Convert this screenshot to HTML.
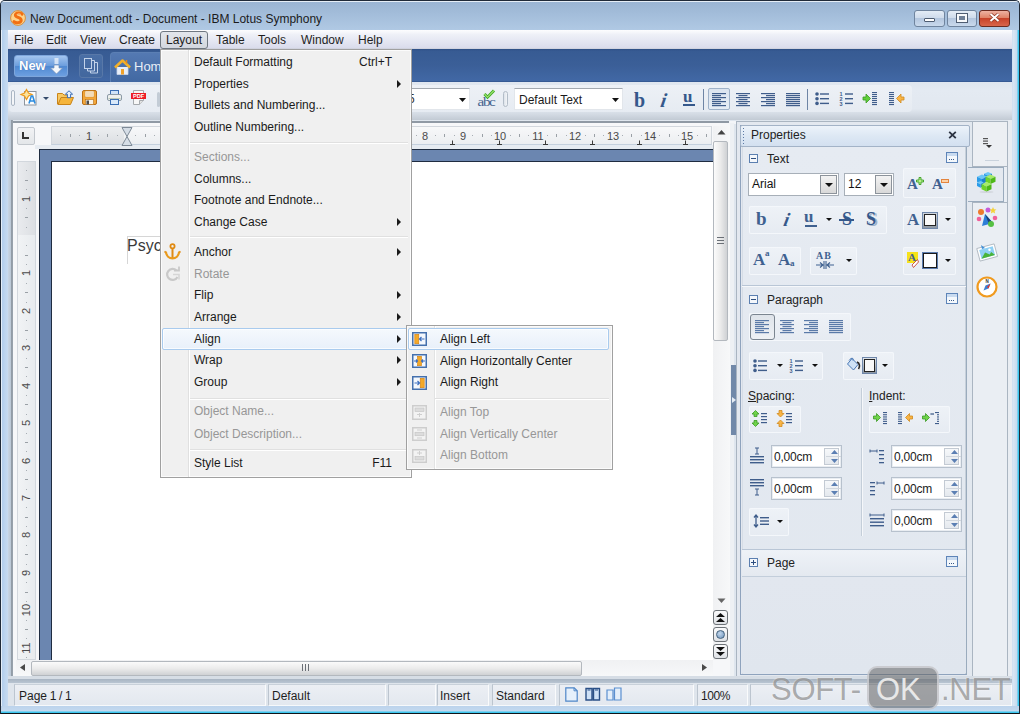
<!DOCTYPE html>
<html><head><meta charset="utf-8">
<style>
*{margin:0;padding:0;box-sizing:border-box}
html,body{width:1020px;height:714px;overflow:hidden;background:#fff}
body{position:relative;font-family:"Liberation Sans",sans-serif;font-size:12px;color:#1e1e1e}
.a{position:absolute}
.t{position:absolute;white-space:nowrap;line-height:14px}
svg{position:absolute;overflow:visible}
.grp{position:absolute;border-radius:2px;background:linear-gradient(#eef2f7,#e6ebf2);box-shadow:inset 0 0 0 1px #f4f7fb}
.spin{position:absolute;width:71px;height:23px;background:#fff;border:1px solid #b7c1cd;box-shadow:inset 0 0 0 1px #e9edf2}
.spin .t{left:2px;top:4px;color:#222;letter-spacing:-0.2px}
.sb{position:absolute;right:2px;top:2px;width:15px;height:17px;border:1px solid #c3cad3;background:linear-gradient(#f6f8fa,#e5e9ee)}
.fld{position:absolute;top:684px;height:22px;background:linear-gradient(#eceff4,#e3e8ef);border-left:1px solid #bcc5cf;border-top:1px solid #c9d1da;border-right:1px solid #fafbfc;border-bottom:1px solid #f7f9fb}
</style></head><body>

<!-- window frame -->
<div class="a" style="left:0;top:0;width:1020px;height:714px;background:#bcd0e8;border-radius:5px 5px 0 0"></div>
<div class="a" style="left:0;top:0;width:1020px;height:714px;border:1px solid #202a38;border-radius:5px 5px 0 0;border-bottom-color:#101418"></div>
<div class="a" style="left:1px;top:1px;width:1018px;height:29px;border-radius:4px 4px 0 0;background:linear-gradient(#e6eef6 0,#e6eef6 1px,#9bb5d3 1px,#a2bcd9 40%,#b0c9e4)"></div>
<div class="a" style="left:1px;top:30px;width:1018px;height:683px;background:linear-gradient(90deg,#e4eef8,#e4eef8 1px,#b2cdec 1px,#bad3ee 3px,#c8dbf0 7px,#c8dbf0 1011px,#dae7f4 1012px,#c6daef 1016px,#3cc6ee 1017px)"></div>
<div class="a" style="left:1px;top:706px;width:1018px;height:7px;background:linear-gradient(#bcd3ec,#c4d9ef 5px,#3cc6ee 6px)"></div>

<!-- title -->
<svg style="left:10px;top:10px" width="16" height="16" viewBox="0 0 16 16">
 <circle cx="8" cy="8" r="7.4" fill="#fcd38c" stroke="#d9903c" stroke-width="1"/>
 <path d="M12 4.2C10.6 2.4 5.8 2.6 5.4 5 5 7.6 11.2 7.2 11.2 10.2 11.2 12.8 6.2 13.6 4 11.6" fill="none" stroke="#f26f12" stroke-width="3" stroke-linecap="round"/>
 <path d="M10.8 4.4C9.6 3.6 7 3.8 6.8 5" fill="none" stroke="#ffe2a8" stroke-width=".8"/>
</svg>
<div class="t" style="left:30px;top:12px;font-size:12px;color:#1b1b1b">New Document.odt - Document - IBM Lotus Symphony</div>

<!-- window buttons -->
<div class="a" style="left:914px;top:10px;width:31px;height:17px;border:1px solid #6f849e;border-radius:3px;background:linear-gradient(#e3ecf6,#cfdcec 45%,#b4c7df 50%,#c9d9ec)"></div>
<div class="a" style="left:924px;top:18px;width:11px;height:4px;background:#fff;border:1px solid #4e5d72;border-radius:1px"></div>
<div class="a" style="left:947px;top:10px;width:30px;height:17px;border:1px solid #6f849e;border-radius:3px;background:linear-gradient(#e3ecf6,#cfdcec 45%,#b4c7df 50%,#c9d9ec)"></div>
<div class="a" style="left:957px;top:14px;width:10px;height:8px;border:2px solid #f7f9fb;outline:1px solid #4e5d72;background:#6f8097"></div>
<div class="a" style="left:979px;top:10px;width:31px;height:17px;border:1px solid #6b2b20;border-radius:3px;background:linear-gradient(#eeb2a2,#e08469 45%,#c8432a 50%,#d9664b)"></div>
<svg style="left:989px;top:13px" width="11" height="9" viewBox="0 0 11 9"><path d="M1.5 1L9.5 8M9.5 1L1.5 8" stroke="#8a3322" stroke-width="3.4"/><path d="M1.5 1L9.5 8M9.5 1L1.5 8" stroke="#fff" stroke-width="2"/></svg>

<!-- menu bar -->
<div class="a" style="left:8px;top:30px;width:1004px;height:19px;background:linear-gradient(#fdfdfe,#eef0f7 25%,#e4e6f2 60%,#dadcec 94%,#c9ccd6)"></div>
<div class="a" style="left:160px;top:31px;width:48px;height:18px;border:1px solid #6f7780;border-radius:3px;background:linear-gradient(#e3e6eb,#d3d7de)"></div>
<div class="t" style="left:14px;top:33px">File</div>
<div class="t" style="left:46px;top:33px">Edit</div>
<div class="t" style="left:80px;top:33px">View</div>
<div class="t" style="left:119px;top:33px">Create</div>
<div class="t" style="left:166px;top:33px">Layout</div>
<div class="t" style="left:216px;top:33px">Table</div>
<div class="t" style="left:258px;top:33px">Tools</div>
<div class="t" style="left:301px;top:33px">Window</div>
<div class="t" style="left:358px;top:33px">Help</div>

<!-- blue band -->
<div class="a" style="left:8px;top:49px;width:1004px;height:33px;background:linear-gradient(#2d4e84,#375b93 2px,#3b5f98 50%,#4168a5 96%,#2f5289)"></div>
<div class="a" style="left:14px;top:55px;width:54px;height:22px;border-radius:3px;border:1px solid #7ea6dc;background:linear-gradient(#a4c5ef,#6d9edd 48%,#5089d2 52%,#6d9fe0)"></div>
<div class="t" style="left:19px;top:59px;color:#fff;font-weight:bold;font-size:13px;text-shadow:0 0 1px #3a6ab0">New</div>
<svg style="left:50px;top:58px" width="13" height="17" viewBox="0 0 13 17">
 <path d="M4.5 1h4M4.5 3h4M4.5 5h4" stroke="#eef3fa" stroke-width="1.3"/>
 <path d="M4 7h5v3h3.5L6.5 16 0.5 10H4z" fill="#f4f7fb" stroke="#6f8db8" stroke-width=".7"/>
</svg>
<div class="a" style="left:79px;top:54px;width:24px;height:24px;border:1px solid #5878a8;border-radius:3px;background:linear-gradient(#4a6fa6,#42679e)"></div>
<svg style="left:84px;top:58px" width="14" height="16" viewBox="0 0 14 16">
 <rect x="0.5" y="0.5" width="7" height="10" fill="none" stroke="#c3d3ea" stroke-width="1"/>
 <path d="M8 2.5h2.5v10.5h-7v-2" fill="none" stroke="#c3d3ea" stroke-width="1"/>
 <path d="M11 4.5h2.5v10.5h-7v-2" fill="none" stroke="#c3d3ea" stroke-width="1"/>
</svg>
<div class="a" style="left:110px;top:52px;width:60px;height:30px;border-radius:4px 4px 0 0;border:1px solid #5b7fb4;border-bottom:none;background:linear-gradient(#5479b2,#4168a2)"></div>
<svg style="left:114px;top:59px" width="17" height="16" viewBox="0 0 17 16">
 <path d="M3 8v7.5h11V8" fill="#e8eef8" stroke="#c9d6e8" stroke-width=".8"/>
 <path d="M1 8.5L8.5 1.5 16 8.5" fill="none" stroke="#f3b02a" stroke-width="2.6" stroke-linejoin="round"/>
 <path d="M12.5 1v3.5" stroke="#e58a1c" stroke-width="1.5"/>
 <rect x="7" y="10" width="3" height="5.5" fill="#f0a22a"/>
</svg>
<div class="t" style="left:134px;top:60px;color:#e8eef7;font-size:13px">Hom</div>

<!-- toolbar 2 -->
<div class="a" style="left:8px;top:82px;width:1004px;height:38px;background:linear-gradient(#dfe6ef,#e4eaf2 20%,#e2e8f0 70%,#d3dae3 85%,#c2cad4)"></div>
<div class="a" style="left:9px;top:85px;width:903px;height:27px;border-radius:4px;background:linear-gradient(#edf1f6,#e6ebf2)"></div>
<!-- toolbar icons -->
<div class="a" style="left:11px;top:90px;width:4px;height:16px;border-radius:2px;border:1px solid #aab6c4;background:#f4f6f9"></div>
<svg style="left:21px;top:89px" width="17" height="17" viewBox="0 0 17 17">
 <rect x="3.5" y="2.5" width="11.5" height="13.5" fill="#fdfdfd" stroke="#8e949c"/>
 <path d="M5.5 0.5L7.5 4 11 5.5 7.5 7 5.5 10.5 3.5 7 0 5.5 3.5 4z" fill="#fbe39e" stroke="#ee9a1c" stroke-width="1.2"/>
 <path d="M8 14.5L10.3 7h1.4l2.3 7.5M9 12h4" fill="none" stroke="#2e8de0" stroke-width="1.6"/>
</svg>
<svg style="left:43px;top:97px" width="6" height="3" viewBox="0 0 6 3"><path d="M0 0h6L3 3z" fill="#334a6a"/></svg>
<svg style="left:57px;top:90px" width="17" height="15" viewBox="0 0 17 15">
 <path d="M0.5 3.5h5l1.5 1.5h6v9h-12.5z" fill="#f7c863" stroke="#c98418"/>
 <path d="M1 14.5l3-7h12.5l-3 7z" fill="#f5b53c" stroke="#c98418"/>
 <path d="M12 0.8l3.6 3.4h-2v3.5h-3.2v-3.5h-2z" fill="#e6f1fb" stroke="#3c6db4"/>
</svg>
<svg style="left:82px;top:90px" width="15" height="15" viewBox="0 0 15 15">
 <rect x="0.5" y="0.5" width="14" height="14" rx="1.5" fill="#f3a73a" stroke="#b86f17"/>
 <rect x="3" y="1" width="9" height="6" fill="#fff8ea" stroke="#d08b2a" stroke-width=".6"/>
 <path d="M4 3h7M4 5h7" stroke="#e0b070" stroke-width=".8"/>
 <rect x="3.5" y="9.5" width="8" height="5" fill="#f7f2e8" stroke="#b86f17" stroke-width=".6"/>
 <rect x="4.5" y="10.5" width="2.5" height="4" fill="#4d4d4d"/>
</svg>
<svg style="left:107px;top:90px" width="15" height="15" viewBox="0 0 15 15">
 <rect x="3.5" y="0.5" width="8" height="5" fill="#cfe3f8" stroke="#3b6fb4"/>
 <rect x="0.5" y="4.5" width="14" height="6" rx="1.5" fill="#eef0ee" stroke="#8c9aa6"/>
 <path d="M1.5 8.5h12" stroke="#b8c8b8"/>
 <rect x="3.5" y="9.5" width="8" height="5" fill="#d9e9fa" stroke="#3b6fb4"/>
</svg>
<svg style="left:131px;top:90px" width="15" height="15" viewBox="0 0 15 15">
 <path d="M2.5 0.5h10v10l-4 4h-6z" fill="#f7f7f7" stroke="#a6aaae"/>
 <path d="M8.5 14.5v-4h4" fill="#e2e2e2" stroke="#a6aaae"/>
 <rect x="0" y="3" width="15" height="6" fill="#ee1c24"/>
 <text x="7.5" y="8.2" font-family="Liberation Sans" font-size="5.6" font-weight="bold" fill="#fff" text-anchor="middle">PDF</text>
</svg>
<div class="a" style="left:157px;top:92px;width:3px;height:15px;border-radius:2px;background:#c3ccd6"></div>

<!-- font name combo (mostly hidden) -->
<div class="a" style="left:380px;top:88px;width:90px;height:22px;background:#fff;border:1px solid #e2e6eb;border-top-color:#a3a9b0"></div>
<div class="t" style="left:408px;top:92px;color:#333;font-size:12px">5</div>
<svg style="left:459px;top:98px" width="7" height="4" viewBox="0 0 7 4"><path d="M0 0h7L3.5 4z" fill="#111"/></svg>
<svg style="left:477px;top:89px" width="19" height="18" viewBox="0 0 19 18">
 <text x="0.5" y="16.5" font-family="Liberation Serif" font-size="13.5" fill="#45628e" letter-spacing="-1.2" textLength="17" lengthAdjust="spacingAndGlyphs">abc</text>
 <path d="M7.5 5l3 3.2L17 1.5" fill="none" stroke="#3faa24" stroke-width="3"/>
 <path d="M7.5 5l3 3.2L17 1.5" fill="none" stroke="#9be06e" stroke-width="1.1"/>
</svg>
<div class="a" style="left:503px;top:91px;width:5px;height:16px;border-radius:3px;border:1px solid #b3bdc8;background:linear-gradient(90deg,#dde3ea,#f3f5f8)"></div>
<div class="a" style="left:514px;top:88px;width:109px;height:22px;background:#fff;border:1px solid #e2e6eb;border-top-color:#a3a9b0"></div>
<div class="t" style="left:519px;top:93px;color:#1a1a1a">Default Text</div>
<svg style="left:612px;top:98px" width="7" height="4" viewBox="0 0 7 4"><path d="M0 0h7L3.5 4z" fill="#111"/></svg>

<div class="t" style="left:634px;top:90px;font-family:'Liberation Serif';font-weight:bold;font-size:20px;line-height:20px;color:#35588b">b</div>
<div class="t" style="left:661px;top:90px;font-family:'Liberation Serif';font-weight:bold;font-style:italic;font-size:20px;line-height:20px;color:#35588b;transform:skewX(-10deg)">i</div>
<div class="t" style="left:683px;top:87px;font-family:'Liberation Serif';font-weight:bold;font-size:17px;line-height:20px;color:#35588b">u</div>
<div class="a" style="left:683px;top:104px;width:12px;height:1.5px;background:#35588b"></div>
<div class="a" style="left:703px;top:89px;width:1px;height:21px;background:#6e85a5"></div>
<div class="a" style="left:708px;top:88px;width:22px;height:22px;border:1px solid #9fb2c9;border-radius:2px;background:linear-gradient(#dbe4ef,#e6edf5)"></div>
<svg style="left:712px;top:93px" width="14" height="14" viewBox="0 0 14 14"><rect x="0" y="0" width="14" height="1.2" fill="#3f5d8b"/><rect x="0" y="2" width="9" height="1.2" fill="#3f5d8b"/><rect x="0" y="4" width="14" height="1.2" fill="#3f5d8b"/><rect x="0" y="6" width="9" height="1.2" fill="#3f5d8b"/><rect x="0" y="8" width="14" height="1.2" fill="#3f5d8b"/><rect x="0" y="10" width="9" height="1.2" fill="#3f5d8b"/><rect x="0" y="12" width="14" height="1.2" fill="#3f5d8b"/></svg>
<svg style="left:736px;top:93px" width="14" height="14" viewBox="0 0 14 14"><rect x="0.0" y="0" width="14.0" height="1.2" fill="#3f5d8b"/><rect x="2.5" y="2" width="9.0" height="1.2" fill="#3f5d8b"/><rect x="0.0" y="4" width="14.0" height="1.2" fill="#3f5d8b"/><rect x="2.5" y="6" width="9.0" height="1.2" fill="#3f5d8b"/><rect x="0.0" y="8" width="14.0" height="1.2" fill="#3f5d8b"/><rect x="2.5" y="10" width="9.0" height="1.2" fill="#3f5d8b"/><rect x="0.0" y="12" width="14.0" height="1.2" fill="#3f5d8b"/></svg>
<svg style="left:761px;top:93px" width="14" height="14" viewBox="0 0 14 14"><rect x="0" y="0" width="14" height="1.2" fill="#3f5d8b"/><rect x="5" y="2" width="9" height="1.2" fill="#3f5d8b"/><rect x="0" y="4" width="14" height="1.2" fill="#3f5d8b"/><rect x="5" y="6" width="9" height="1.2" fill="#3f5d8b"/><rect x="0" y="8" width="14" height="1.2" fill="#3f5d8b"/><rect x="5" y="10" width="9" height="1.2" fill="#3f5d8b"/><rect x="0" y="12" width="14" height="1.2" fill="#3f5d8b"/></svg>
<svg style="left:786px;top:93px" width="14" height="14" viewBox="0 0 14 14"><rect x="0" y="0" width="14" height="1.2" fill="#3f5d8b"/><rect x="0" y="2" width="14" height="1.2" fill="#3f5d8b"/><rect x="0" y="4" width="14" height="1.2" fill="#3f5d8b"/><rect x="0" y="6" width="14" height="1.2" fill="#3f5d8b"/><rect x="0" y="8" width="14" height="1.2" fill="#3f5d8b"/><rect x="0" y="10" width="14" height="1.2" fill="#3f5d8b"/><rect x="0" y="12" width="14" height="1.2" fill="#3f5d8b"/></svg><div class="a" style="left:807px;top:89px;width:1px;height:21px;background:#6e85a5"></div>
<svg style="left:815px;top:92px" width="15" height="14" viewBox="0 0 15 14">
 <circle cx="2" cy="2" r="1.8" fill="#3f5d8b"/><circle cx="2" cy="6.7" r="1.8" fill="#3f5d8b"/><circle cx="2" cy="11.4" r="1.8" fill="#3f5d8b"/>
 <rect x="5" y="1.3" width="9" height="1.4" fill="#3f5d8b"/><rect x="5" y="6" width="9" height="1.4" fill="#3f5d8b"/><rect x="5" y="10.7" width="9" height="1.4" fill="#3f5d8b"/>
</svg>
<svg style="left:839px;top:91px" width="15" height="15" viewBox="0 0 15 15">
 <text x="0.5" y="5" font-family="Liberation Sans" font-size="5.5" font-weight="bold" fill="#3f5d8b">1</text>
 <text x="0.5" y="10" font-family="Liberation Sans" font-size="5.5" font-weight="bold" fill="#3f5d8b">2</text>
 <text x="0.5" y="15" font-family="Liberation Sans" font-size="5.5" font-weight="bold" fill="#3f5d8b">3</text>
 <rect x="6" y="2.3" width="8" height="1.4" fill="#3f5d8b"/><rect x="6" y="7" width="8" height="1.4" fill="#3f5d8b"/><rect x="6" y="11.7" width="8" height="1.4" fill="#3f5d8b"/>
</svg>
<svg style="left:862px;top:92px" width="16" height="14" viewBox="0 0 16 14">
 <path d="M1 5h3V2l4.5 4.5L4 11V8H1z" fill="#5fcf3a" stroke="#3a9a22" stroke-width=".8"/>
 <g fill="#3f5d8b"><rect x="10" y="0" width="5" height="1.1"/><rect x="10" y="2" width="5" height="1.1"/><rect x="10" y="4" width="5" height="1.1"/><rect x="10" y="6" width="5" height="1.1"/><rect x="10" y="8" width="5" height="1.1"/><rect x="10" y="10" width="5" height="1.1"/><rect x="10" y="12" width="5" height="1.1"/></g>
</svg>
<svg style="left:889px;top:92px" width="16" height="14" viewBox="0 0 16 14">
 <g fill="#3f5d8b"><rect x="0" y="0" width="5" height="1.1"/><rect x="0" y="2" width="5" height="1.1"/><rect x="0" y="4" width="5" height="1.1"/><rect x="0" y="6" width="5" height="1.1"/><rect x="0" y="8" width="5" height="1.1"/><rect x="0" y="10" width="5" height="1.1"/><rect x="0" y="12" width="5" height="1.1"/></g>
 <path d="M15 5h-3V2L7.5 6.5 12 11V8h3z" fill="#f8b445" stroke="#d08a1e" stroke-width=".8"/>
</svg>
<!-- main area -->
<div class="a" style="left:8px;top:120px;width:1004px;height:558px;background:#dfe6ee"></div>
<div class="a" style="left:8px;top:120px;width:5px;height:558px;background:linear-gradient(90deg,#c9d6e4,#bac7d5 3px,#8f99a4 3px,#9aa4ae)"></div>
<div class="a" style="left:13px;top:121px;width:721px;height:557px;background:#f6f7f9;border-top:2px solid #8f99a4"></div>
<div class="a" style="left:729px;top:121px;width:7px;height:3px;background:#f3f5f8"></div>
<div class="a" style="left:17px;top:127px;width:18px;height:18px;border:1px solid #c2c7cd;border-radius:2px;background:linear-gradient(#f2f3f5,#e3e6e9)"></div>
<svg style="left:22px;top:132px" width="8" height="7" viewBox="0 0 8 7"><path d="M1 0v6h6" fill="none" stroke="#333" stroke-width="2"/></svg>
<div class="a" style="left:51px;top:126px;width:661px;height:19px;border:1px solid #d2d7dd;border-bottom:1px solid #c5d0dd;background:linear-gradient(#f7f8f9,#eceef1)"></div>
<div class="a" style="left:52px;top:127px;width:72px;height:17px;background:linear-gradient(#eceef0,#dcdfe3)"></div>
<div class="a" style="left:35px;top:145px;width:678px;height:4px;background:#e6ebf1"></div>
<div class="a" style="left:39px;top:149px;width:674px;height:511px;background:#6b86b0;border-left:1px solid #1f2c40;border-top:1px solid #1f2c40"></div>
<div class="a" style="left:51px;top:161px;width:662px;height:499px;background:#fff;border-left:1px solid #1f2c40;border-top:1px solid #1f2c40"></div>
<div class="a" style="left:17px;top:161px;width:19px;height:499px;border:1px solid #d2d7dd;background:linear-gradient(90deg,#f1f3f5,#e8ebee)"></div>
<div class="a" style="left:18px;top:162px;width:17px;height:73px;background:linear-gradient(90deg,#e9ebee,#dcdfe3)"></div>
<div class="t" style="left:79px;top:129px;width:20px;text-align:center;font-size:11px;color:#4a4a4a">1</div>
<div class="t" style="left:153px;top:129px;width:20px;text-align:center;font-size:11px;color:#4a4a4a">1</div>
<div class="t" style="left:191px;top:129px;width:20px;text-align:center;font-size:11px;color:#4a4a4a">2</div>
<div class="t" style="left:228px;top:129px;width:20px;text-align:center;font-size:11px;color:#4a4a4a">3</div>
<div class="t" style="left:266px;top:129px;width:20px;text-align:center;font-size:11px;color:#4a4a4a">4</div>
<div class="t" style="left:303px;top:129px;width:20px;text-align:center;font-size:11px;color:#4a4a4a">5</div>
<div class="t" style="left:341px;top:129px;width:20px;text-align:center;font-size:11px;color:#4a4a4a">6</div>
<div class="t" style="left:378px;top:129px;width:20px;text-align:center;font-size:11px;color:#4a4a4a">7</div>
<div class="t" style="left:415px;top:129px;width:20px;text-align:center;font-size:11px;color:#4a4a4a">8</div>
<div class="t" style="left:453px;top:129px;width:20px;text-align:center;font-size:11px;color:#4a4a4a">9</div>
<div class="t" style="left:490px;top:129px;width:20px;text-align:center;font-size:11px;color:#4a4a4a">10</div>
<div class="t" style="left:528px;top:129px;width:20px;text-align:center;font-size:11px;color:#4a4a4a">11</div>
<div class="t" style="left:565px;top:129px;width:20px;text-align:center;font-size:11px;color:#4a4a4a">12</div>
<div class="t" style="left:603px;top:129px;width:20px;text-align:center;font-size:11px;color:#4a4a4a">13</div>
<div class="t" style="left:640px;top:129px;width:20px;text-align:center;font-size:11px;color:#4a4a4a">14</div>
<div class="t" style="left:677px;top:129px;width:20px;text-align:center;font-size:11px;color:#4a4a4a">15</div>
<div class="a" style="left:60px;top:135px;width:1px;height:1px;background:#a7adb3"></div>
<div class="a" style="left:70px;top:134px;width:1px;height:3px;background:#9aa0a6"></div>
<div class="a" style="left:79px;top:135px;width:1px;height:1px;background:#a7adb3"></div>
<div class="a" style="left:98px;top:135px;width:1px;height:1px;background:#a7adb3"></div>
<div class="a" style="left:107px;top:134px;width:1px;height:3px;background:#9aa0a6"></div>
<div class="a" style="left:117px;top:135px;width:1px;height:1px;background:#a7adb3"></div>
<div class="a" style="left:135px;top:135px;width:1px;height:1px;background:#a7adb3"></div>
<div class="a" style="left:145px;top:134px;width:1px;height:3px;background:#9aa0a6"></div>
<div class="a" style="left:154px;top:135px;width:1px;height:1px;background:#a7adb3"></div>
<div class="a" style="left:173px;top:135px;width:1px;height:1px;background:#a7adb3"></div>
<div class="a" style="left:182px;top:134px;width:1px;height:3px;background:#9aa0a6"></div>
<div class="a" style="left:192px;top:135px;width:1px;height:1px;background:#a7adb3"></div>
<div class="a" style="left:210px;top:135px;width:1px;height:1px;background:#a7adb3"></div>
<div class="a" style="left:220px;top:134px;width:1px;height:3px;background:#9aa0a6"></div>
<div class="a" style="left:229px;top:135px;width:1px;height:1px;background:#a7adb3"></div>
<div class="a" style="left:248px;top:135px;width:1px;height:1px;background:#a7adb3"></div>
<div class="a" style="left:257px;top:134px;width:1px;height:3px;background:#9aa0a6"></div>
<div class="a" style="left:266px;top:135px;width:1px;height:1px;background:#a7adb3"></div>
<div class="a" style="left:285px;top:135px;width:1px;height:1px;background:#a7adb3"></div>
<div class="a" style="left:294px;top:134px;width:1px;height:3px;background:#9aa0a6"></div>
<div class="a" style="left:304px;top:135px;width:1px;height:1px;background:#a7adb3"></div>
<div class="a" style="left:323px;top:135px;width:1px;height:1px;background:#a7adb3"></div>
<div class="a" style="left:332px;top:134px;width:1px;height:3px;background:#9aa0a6"></div>
<div class="a" style="left:341px;top:135px;width:1px;height:1px;background:#a7adb3"></div>
<div class="a" style="left:360px;top:135px;width:1px;height:1px;background:#a7adb3"></div>
<div class="a" style="left:369px;top:134px;width:1px;height:3px;background:#9aa0a6"></div>
<div class="a" style="left:379px;top:135px;width:1px;height:1px;background:#a7adb3"></div>
<div class="a" style="left:397px;top:135px;width:1px;height:1px;background:#a7adb3"></div>
<div class="a" style="left:407px;top:134px;width:1px;height:3px;background:#9aa0a6"></div>
<div class="a" style="left:416px;top:135px;width:1px;height:1px;background:#a7adb3"></div>
<div class="a" style="left:435px;top:135px;width:1px;height:1px;background:#a7adb3"></div>
<div class="a" style="left:444px;top:134px;width:1px;height:3px;background:#9aa0a6"></div>
<div class="a" style="left:454px;top:135px;width:1px;height:1px;background:#a7adb3"></div>
<div class="a" style="left:472px;top:135px;width:1px;height:1px;background:#a7adb3"></div>
<div class="a" style="left:482px;top:134px;width:1px;height:3px;background:#9aa0a6"></div>
<div class="a" style="left:491px;top:135px;width:1px;height:1px;background:#a7adb3"></div>
<div class="a" style="left:510px;top:135px;width:1px;height:1px;background:#a7adb3"></div>
<div class="a" style="left:519px;top:134px;width:1px;height:3px;background:#9aa0a6"></div>
<div class="a" style="left:528px;top:135px;width:1px;height:1px;background:#a7adb3"></div>
<div class="a" style="left:547px;top:135px;width:1px;height:1px;background:#a7adb3"></div>
<div class="a" style="left:556px;top:134px;width:1px;height:3px;background:#9aa0a6"></div>
<div class="a" style="left:566px;top:135px;width:1px;height:1px;background:#a7adb3"></div>
<div class="a" style="left:585px;top:135px;width:1px;height:1px;background:#a7adb3"></div>
<div class="a" style="left:594px;top:134px;width:1px;height:3px;background:#9aa0a6"></div>
<div class="a" style="left:603px;top:135px;width:1px;height:1px;background:#a7adb3"></div>
<div class="a" style="left:622px;top:135px;width:1px;height:1px;background:#a7adb3"></div>
<div class="a" style="left:631px;top:134px;width:1px;height:3px;background:#9aa0a6"></div>
<div class="a" style="left:641px;top:135px;width:1px;height:1px;background:#a7adb3"></div>
<div class="a" style="left:659px;top:135px;width:1px;height:1px;background:#a7adb3"></div>
<div class="a" style="left:669px;top:134px;width:1px;height:3px;background:#9aa0a6"></div>
<div class="a" style="left:678px;top:135px;width:1px;height:1px;background:#a7adb3"></div>
<div class="a" style="left:697px;top:135px;width:1px;height:1px;background:#a7adb3"></div>
<div class="a" style="left:706px;top:134px;width:1px;height:3px;background:#9aa0a6"></div>
<svg style="left:170px;top:140px" width="5" height="5" viewBox="0 0 5 5"><path d="M2.5 0.5v3.5M0 4.5h5" stroke="#3a3a3a" stroke-width="1"/></svg>
<svg style="left:217px;top:140px" width="5" height="5" viewBox="0 0 5 5"><path d="M2.5 0.5v3.5M0 4.5h5" stroke="#3a3a3a" stroke-width="1"/></svg>
<svg style="left:263px;top:140px" width="5" height="5" viewBox="0 0 5 5"><path d="M2.5 0.5v3.5M0 4.5h5" stroke="#3a3a3a" stroke-width="1"/></svg>
<svg style="left:310px;top:140px" width="5" height="5" viewBox="0 0 5 5"><path d="M2.5 0.5v3.5M0 4.5h5" stroke="#3a3a3a" stroke-width="1"/></svg>
<svg style="left:357px;top:140px" width="5" height="5" viewBox="0 0 5 5"><path d="M2.5 0.5v3.5M0 4.5h5" stroke="#3a3a3a" stroke-width="1"/></svg>
<svg style="left:403px;top:140px" width="5" height="5" viewBox="0 0 5 5"><path d="M2.5 0.5v3.5M0 4.5h5" stroke="#3a3a3a" stroke-width="1"/></svg>
<svg style="left:450px;top:140px" width="5" height="5" viewBox="0 0 5 5"><path d="M2.5 0.5v3.5M0 4.5h5" stroke="#3a3a3a" stroke-width="1"/></svg>
<svg style="left:497px;top:140px" width="5" height="5" viewBox="0 0 5 5"><path d="M2.5 0.5v3.5M0 4.5h5" stroke="#3a3a3a" stroke-width="1"/></svg>
<svg style="left:543px;top:140px" width="5" height="5" viewBox="0 0 5 5"><path d="M2.5 0.5v3.5M0 4.5h5" stroke="#3a3a3a" stroke-width="1"/></svg>
<svg style="left:590px;top:140px" width="5" height="5" viewBox="0 0 5 5"><path d="M2.5 0.5v3.5M0 4.5h5" stroke="#3a3a3a" stroke-width="1"/></svg>
<svg style="left:637px;top:140px" width="5" height="5" viewBox="0 0 5 5"><path d="M2.5 0.5v3.5M0 4.5h5" stroke="#3a3a3a" stroke-width="1"/></svg>
<svg style="left:683px;top:140px" width="5" height="5" viewBox="0 0 5 5"><path d="M2.5 0.5v3.5M0 4.5h5" stroke="#3a3a3a" stroke-width="1"/></svg>
<svg style="left:121px;top:127px" width="12" height="19" viewBox="0 0 12 19"><path d="M1 0.5h10L6 9.5zM1 18.5h10L6 9.5z" fill="#d5dde6" stroke="#7e8a97"/></svg>
<div class="t" style="left:16px;top:192px;width:20px;text-align:center;font-size:11px;color:#4a4a4a;transform:rotate(-90deg)">1</div>
<div class="t" style="left:16px;top:266px;width:20px;text-align:center;font-size:11px;color:#4a4a4a;transform:rotate(-90deg)">1</div>
<div class="t" style="left:16px;top:304px;width:20px;text-align:center;font-size:11px;color:#4a4a4a;transform:rotate(-90deg)">2</div>
<div class="t" style="left:16px;top:341px;width:20px;text-align:center;font-size:11px;color:#4a4a4a;transform:rotate(-90deg)">3</div>
<div class="t" style="left:16px;top:379px;width:20px;text-align:center;font-size:11px;color:#4a4a4a;transform:rotate(-90deg)">4</div>
<div class="t" style="left:16px;top:416px;width:20px;text-align:center;font-size:11px;color:#4a4a4a;transform:rotate(-90deg)">5</div>
<div class="t" style="left:16px;top:454px;width:20px;text-align:center;font-size:11px;color:#4a4a4a;transform:rotate(-90deg)">6</div>
<div class="t" style="left:16px;top:491px;width:20px;text-align:center;font-size:11px;color:#4a4a4a;transform:rotate(-90deg)">7</div>
<div class="t" style="left:16px;top:528px;width:20px;text-align:center;font-size:11px;color:#4a4a4a;transform:rotate(-90deg)">8</div>
<div class="t" style="left:16px;top:566px;width:20px;text-align:center;font-size:11px;color:#4a4a4a;transform:rotate(-90deg)">9</div>
<div class="t" style="left:16px;top:603px;width:20px;text-align:center;font-size:11px;color:#4a4a4a;transform:rotate(-90deg)">10</div>
<div class="t" style="left:16px;top:641px;width:20px;text-align:center;font-size:11px;color:#4a4a4a;transform:rotate(-90deg)">11</div>
<div class="a" style="left:26px;top:170px;width:1px;height:1px;background:#a7adb3"></div>
<div class="a" style="left:25px;top:180px;width:3px;height:1px;background:#9aa0a6"></div>
<div class="a" style="left:26px;top:189px;width:1px;height:1px;background:#a7adb3"></div>
<div class="a" style="left:26px;top:208px;width:1px;height:1px;background:#a7adb3"></div>
<div class="a" style="left:25px;top:217px;width:3px;height:1px;background:#9aa0a6"></div>
<div class="a" style="left:26px;top:227px;width:1px;height:1px;background:#a7adb3"></div>
<div class="a" style="left:26px;top:245px;width:1px;height:1px;background:#a7adb3"></div>
<div class="a" style="left:25px;top:255px;width:3px;height:1px;background:#9aa0a6"></div>
<div class="a" style="left:26px;top:264px;width:1px;height:1px;background:#a7adb3"></div>
<div class="a" style="left:26px;top:283px;width:1px;height:1px;background:#a7adb3"></div>
<div class="a" style="left:25px;top:292px;width:3px;height:1px;background:#9aa0a6"></div>
<div class="a" style="left:26px;top:302px;width:1px;height:1px;background:#a7adb3"></div>
<div class="a" style="left:26px;top:320px;width:1px;height:1px;background:#a7adb3"></div>
<div class="a" style="left:25px;top:330px;width:3px;height:1px;background:#9aa0a6"></div>
<div class="a" style="left:26px;top:339px;width:1px;height:1px;background:#a7adb3"></div>
<div class="a" style="left:26px;top:358px;width:1px;height:1px;background:#a7adb3"></div>
<div class="a" style="left:25px;top:367px;width:3px;height:1px;background:#9aa0a6"></div>
<div class="a" style="left:26px;top:376px;width:1px;height:1px;background:#a7adb3"></div>
<div class="a" style="left:26px;top:395px;width:1px;height:1px;background:#a7adb3"></div>
<div class="a" style="left:25px;top:404px;width:3px;height:1px;background:#9aa0a6"></div>
<div class="a" style="left:26px;top:414px;width:1px;height:1px;background:#a7adb3"></div>
<div class="a" style="left:26px;top:433px;width:1px;height:1px;background:#a7adb3"></div>
<div class="a" style="left:25px;top:442px;width:3px;height:1px;background:#9aa0a6"></div>
<div class="a" style="left:26px;top:451px;width:1px;height:1px;background:#a7adb3"></div>
<div class="a" style="left:26px;top:470px;width:1px;height:1px;background:#a7adb3"></div>
<div class="a" style="left:25px;top:479px;width:3px;height:1px;background:#9aa0a6"></div>
<div class="a" style="left:26px;top:489px;width:1px;height:1px;background:#a7adb3"></div>
<div class="a" style="left:26px;top:507px;width:1px;height:1px;background:#a7adb3"></div>
<div class="a" style="left:25px;top:517px;width:3px;height:1px;background:#9aa0a6"></div>
<div class="a" style="left:26px;top:526px;width:1px;height:1px;background:#a7adb3"></div>
<div class="a" style="left:26px;top:545px;width:1px;height:1px;background:#a7adb3"></div>
<div class="a" style="left:25px;top:554px;width:3px;height:1px;background:#9aa0a6"></div>
<div class="a" style="left:26px;top:564px;width:1px;height:1px;background:#a7adb3"></div>
<div class="a" style="left:26px;top:582px;width:1px;height:1px;background:#a7adb3"></div>
<div class="a" style="left:25px;top:592px;width:3px;height:1px;background:#9aa0a6"></div>
<div class="a" style="left:26px;top:601px;width:1px;height:1px;background:#a7adb3"></div>
<div class="a" style="left:26px;top:620px;width:1px;height:1px;background:#a7adb3"></div>
<div class="a" style="left:25px;top:629px;width:3px;height:1px;background:#9aa0a6"></div>
<div class="a" style="left:26px;top:638px;width:1px;height:1px;background:#a7adb3"></div>
<div class="a" style="left:26px;top:657px;width:1px;height:1px;background:#a7adb3"></div>
<div class="a" style="left:127px;top:236px;width:40px;height:1px;background:#d6d6d6"></div>
<div class="a" style="left:127px;top:236px;width:1px;height:28px;background:#d6d6d6"></div>
<div class="t" style="left:127px;top:237px;font-size:16px;line-height:18px;color:#3a3a3a">Psyc</div>
<div class="a" style="left:713px;top:126px;width:17px;height:534px;background:linear-gradient(90deg,#f0f1f3,#f7f8f9)"></div>
<svg style="left:717px;top:129px" width="9" height="6" viewBox="0 0 9 6"><path d="M0.5 5.5L4.5 1 8.5 5.5z" fill="#444"/></svg>
<div class="a" style="left:713px;top:141px;width:15px;height:200px;border:1px solid #b3b8be;border-radius:2px;background:linear-gradient(90deg,#fbfbfb,#ebebeb 50%,#cfd1d4)"></div>
<div class="a" style="left:717px;top:237px;width:7px;height:8px;background:repeating-linear-gradient(#6a6f76 0 1.3px,transparent 1.3px 3px)"></div>
<svg style="left:717px;top:598px" width="9" height="6" viewBox="0 0 9 6"><path d="M0.5 0.5L4.5 5 8.5 0.5z" fill="#666"/></svg>
<div class="a" style="left:713px;top:610px;width:15px;height:15px;border:1px solid #6d7277;border-radius:3px;background:linear-gradient(#fbfbfc,#dfe2e6)"></div>
<svg style="left:716px;top:613px" width="9" height="9" viewBox="0 0 9 9"><path d="M4.5 0L9 4H0zM4.5 5L9 9H0z" fill="#111"/></svg>
<div class="a" style="left:713px;top:627px;width:15px;height:15px;border:1px solid #6d7277;border-radius:3px;background:linear-gradient(#fbfbfc,#dfe2e6)"></div>
<div class="a" style="left:716px;top:630px;width:9px;height:9px;border-radius:50%;border:1px solid #44627e;background:radial-gradient(circle at 40% 35%,#c3d7ec,#6d93bb)"></div>
<div class="a" style="left:713px;top:644px;width:15px;height:15px;border:1px solid #6d7277;border-radius:3px;background:linear-gradient(#fbfbfc,#dfe2e6)"></div>
<svg style="left:716px;top:647px" width="9" height="9" viewBox="0 0 9 9"><path d="M4.5 4L9 0H0zM4.5 9L9 5H0z" fill="#111"/></svg>
<div class="a" style="left:16px;top:660px;width:697px;height:16px;background:linear-gradient(#f0f1f3,#f7f8f9)"></div>
<svg style="left:20px;top:664px" width="5" height="7" viewBox="0 0 5 7"><path d="M5 0L0 3.5 5 7z" fill="#4a4a4a"/></svg>
<div class="a" style="left:31px;top:661px;width:551px;height:15px;border:1px solid #b3b8be;border-radius:2px;background:linear-gradient(#fbfbfb,#ebebeb 50%,#cfd1d4)"></div>
<div class="a" style="left:302px;top:664px;width:8px;height:7px;background:repeating-linear-gradient(90deg,#6a6f76 0 1.3px,transparent 1.3px 3px)"></div>
<svg style="left:702px;top:664px" width="5" height="7" viewBox="0 0 5 7"><path d="M0 0L5 3.5 0 7z" fill="#4a4a4a"/></svg>
<div class="a" style="left:730px;top:123px;width:4px;height:555px;background:#eef1f4"></div>
<div class="a" style="left:731px;top:365px;width:6px;height:70px;background:#7189a9"></div>
<svg style="left:732px;top:397px" width="4" height="6" viewBox="0 0 4 6"><path d="M0 0L4 3 0 6z" fill="#e6edf5"/></svg><!-- sidebar -->
<div class="a" style="left:736px;top:121px;width:272px;height:557px;background:#e3e8ef;border:1px solid #aab5c1"></div>
<div class="a" style="left:740px;top:125px;width:227px;height:550px;background:#e3e8f0;border:1px solid #8fa3bd;border-right-color:#9aabbd"></div>
<div class="a" style="left:740px;top:125px;width:230px;height:22px;border-radius:2px;background:linear-gradient(#edf3fa,#dde8f4 50%,#d3e0f0);border:1px solid #a3b3c7"></div>
<div class="a" style="left:743px;top:128px;width:1px;height:16px;background:repeating-linear-gradient(#5d7aa4 0 1px,transparent 1px 3px)"></div>
<div class="t" style="left:751px;top:128px;color:#222">Properties</div>
<svg style="left:948px;top:131px" width="9" height="8" viewBox="0 0 9 8"><path d="M1.2 0.8L7.8 7.2M7.8 0.8L1.2 7.2" stroke="#2c3442" stroke-width="1.8"/></svg>
<div class="a" style="left:742px;top:147px;width:224px;height:527px;background:linear-gradient(#e6ebf2,#e1e7ef);border-left:1px solid #d6dde6;border-right:1px solid #c7d0da"></div>
<div class="a" style="left:749px;top:154px;width:9px;height:9px;border:1px solid #5b7fb0;background:#f4f7fb"></div>
<div class="a" style="left:751px;top:158px;width:5px;height:1px;background:#2e4f80"></div>
<div class="t" style="left:767px;top:152px;color:#222">Text</div>
<div class="a" style="left:946px;top:152px;width:12px;height:11px;border:1px solid #5d84b8;background:linear-gradient(#c9dbf0 0 3px,#f4f8fc 3px)"></div>
<div class="a" style="left:949px;top:159px;width:6px;height:1px;background:repeating-linear-gradient(90deg,#3a5a88 0 1px,transparent 1px 2px)"></div>
<div class="a" style="left:748px;top:173px;width:91px;height:23px;background:#fff;border:1px solid #a7afb8"></div>
<div class="t" style="left:752px;top:177px;color:#111">Arial</div>
<div class="a" style="left:820px;top:175px;width:17px;height:19px;border:1px solid #8c939b;background:linear-gradient(#f3f3f3,#d9d9d9)"></div>
<svg style="left:825px;top:183px" width="8" height="4" viewBox="0 0 8 4"><path d="M0 0h8L4 4z" fill="#111"/></svg>
<div class="a" style="left:844px;top:173px;width:50px;height:23px;background:#fff;border:1px solid #a7afb8"></div>
<div class="t" style="left:848px;top:177px;color:#111">12</div>
<div class="a" style="left:875px;top:175px;width:17px;height:19px;border:1px solid #8c939b;background:linear-gradient(#f3f3f3,#d9d9d9)"></div>
<svg style="left:880px;top:183px" width="8" height="4" viewBox="0 0 8 4"><path d="M0 0h8L4 4z" fill="#111"/></svg>
<div class="grp" style="left:903px;top:168px;width:53px;height:30px"></div>
<div class="t" style="left:907px;top:176px;font-family:'Liberation Serif';font-weight:bold;font-size:15px;line-height:16px;color:#3f6190">A</div>
<svg style="left:916px;top:177px" width="8" height="8" viewBox="0 0 8 8"><path d="M3 0.5h2v2.5h2.5v2H5v2.5H3V5H0.5V3H3z" fill="#b8f08e" stroke="#3a9e22" stroke-width=".9"/></svg>
<div class="t" style="left:932px;top:176px;font-family:'Liberation Serif';font-weight:bold;font-size:15px;line-height:16px;color:#3f6190">A</div>
<div class="a" style="left:941px;top:179px;width:8px;height:4px;background:#fbd2a8;border:1px solid #e3853e"></div>
<div class="grp" style="left:749px;top:206px;width:138px;height:28px"></div>
<div class="t" style="left:756px;top:209px;font-family:'Liberation Serif';font-weight:bold;font-size:19px;line-height:20px;color:#3f6190">b</div>
<div class="t" style="left:784px;top:210px;font-family:'Liberation Serif';font-weight:bold;font-style:italic;font-size:19px;line-height:20px;color:#35588b;transform:skewX(-12deg)">i</div>
<div class="t" style="left:804px;top:207px;font-family:'Liberation Serif';font-weight:bold;font-size:17px;line-height:20px;color:#3f6190">u</div>
<div class="a" style="left:805px;top:225px;width:12px;height:2px;background:#3f6190"></div>
<svg style="left:826px;top:218px" width="6" height="3" viewBox="0 0 6 3"><path d="M0 0h6L3 3z" fill="#111"/></svg>
<div class="t" style="left:842px;top:209px;font-family:'Liberation Serif';font-weight:bold;font-size:18px;line-height:20px;color:#35588b">S</div>
<div class="a" style="left:839px;top:219px;width:15px;height:1.5px;background:#35588b"></div>
<div class="t" style="left:868px;top:210px;font-family:'Liberation Serif';font-weight:bold;font-size:18px;line-height:20px;color:#9fb1c9">S</div>
<div class="t" style="left:866px;top:209px;font-family:'Liberation Serif';font-weight:bold;font-size:18px;line-height:20px;color:#35588b">S</div>
<div class="grp" style="left:903px;top:206px;width:53px;height:28px"></div>
<div class="t" style="left:907px;top:211px;font-family:'Liberation Serif';font-weight:bold;font-size:17px;line-height:18px;color:#3f6190">A</div>
<div class="a" style="left:922px;top:212px;width:16px;height:17px;border:1px solid #6f87aa;background:linear-gradient(#cfd6de,#8c96a2)"></div>
<div class="a" style="left:924px;top:214px;width:12px;height:12px;border:1px solid #222;background:#f8f8f8"></div>
<svg style="left:945px;top:218px" width="6" height="3" viewBox="0 0 6 3"><path d="M0 0h6L3 3z" fill="#111"/></svg>
<div class="grp" style="left:749px;top:247px;width:52px;height:28px"></div>
<div class="t" style="left:753px;top:251px;font-family:'Liberation Serif';font-weight:bold;font-size:17px;line-height:18px;color:#3f6190">A</div>
<div class="t" style="left:765px;top:248px;font-family:'Liberation Serif';font-weight:bold;font-size:9px;line-height:10px;color:#3f6190">a</div>
<div class="t" style="left:778px;top:251px;font-family:'Liberation Serif';font-weight:bold;font-size:17px;line-height:18px;color:#3f6190">A</div>
<div class="t" style="left:790px;top:258px;font-family:'Liberation Serif';font-weight:bold;font-size:9px;line-height:10px;color:#3f6190">a</div>
<div class="grp" style="left:810px;top:247px;width:47px;height:28px"></div>
<div class="t" style="left:816px;top:251px;font-family:'Liberation Serif';font-weight:bold;font-size:10px;line-height:10px;color:#3f6190;letter-spacing:1px">AB</div>
<svg style="left:816px;top:261px" width="18" height="8" viewBox="0 0 18 8"><path d="M0 4h7M11 4h7M8 0v8M10 0v8M4 1.5L7 4 4 6.5M14 1.5L11 4 14 6.5" fill="none" stroke="#3f6190" stroke-width="1.1"/></svg>
<svg style="left:846px;top:259px" width="6" height="3" viewBox="0 0 6 3"><path d="M0 0h6L3 3z" fill="#111"/></svg>
<div class="grp" style="left:903px;top:247px;width:53px;height:28px"></div>
<div class="a" style="left:907px;top:252px;width:11px;height:11px;background:#f6e21a"></div>
<div class="t" style="left:908px;top:251px;font-family:'Liberation Serif';font-weight:bold;font-size:11px;line-height:12px;color:#3f6190">A</div>
<svg style="left:911px;top:259px" width="8" height="9" viewBox="0 0 8 9"><path d="M6.5 0.5L1 6 2.5 8.5 7.5 3z" fill="#fff" stroke="#c6463a" stroke-width=".9"/></svg>
<div class="a" style="left:922px;top:252px;width:16px;height:17px;border:1px solid #5c7cad;background:#fff"></div>
<div class="a" style="left:923px;top:253px;width:14px;height:15px;border:1.5px solid #1a1a1a;background:#fff"></div>
<svg style="left:945px;top:259px" width="6" height="3" viewBox="0 0 6 3"><path d="M0 0h6L3 3z" fill="#111"/></svg>
<div class="a" style="left:742px;top:285px;width:224px;height:1px;background:#b9c6d6"></div>
<div class="a" style="left:742px;top:286px;width:224px;height:1px;background:#f6f8fb"></div>
<div class="a" style="left:749px;top:295px;width:9px;height:9px;border:1px solid #5b7fb0;background:#f4f7fb"></div>
<div class="a" style="left:751px;top:299px;width:5px;height:1px;background:#2e4f80"></div>
<div class="t" style="left:767px;top:293px;color:#222">Paragraph</div>
<div class="a" style="left:946px;top:293px;width:12px;height:11px;border:1px solid #5d84b8;background:linear-gradient(#c9dbf0 0 3px,#f4f8fc 3px)"></div>
<div class="a" style="left:949px;top:300px;width:6px;height:1px;background:repeating-linear-gradient(90deg,#3a5a88 0 1px,transparent 1px 2px)"></div>
<div class="grp" style="left:749px;top:313px;width:102px;height:28px"></div>
<div class="a" style="left:750px;top:314px;width:25px;height:26px;border:1px solid #7b8590;border-radius:3px;background:linear-gradient(#dfe4ea,#eef1f5)"></div>
<svg style="left:755px;top:320px" width="14" height="14" viewBox="0 0 14 14"><rect x="0" y="0" width="14" height="1.2" fill="#5a7aa8"/><rect x="0" y="2" width="9" height="1.2" fill="#5a7aa8"/><rect x="0" y="4" width="14" height="1.2" fill="#5a7aa8"/><rect x="0" y="6" width="9" height="1.2" fill="#5a7aa8"/><rect x="0" y="8" width="14" height="1.2" fill="#5a7aa8"/><rect x="0" y="10" width="9" height="1.2" fill="#5a7aa8"/><rect x="0" y="12" width="14" height="1.2" fill="#5a7aa8"/></svg>
<svg style="left:780px;top:320px" width="14" height="14" viewBox="0 0 14 14"><rect x="0.0" y="0" width="14.0" height="1.2" fill="#5a7aa8"/><rect x="2.5" y="2" width="9.0" height="1.2" fill="#5a7aa8"/><rect x="0.0" y="4" width="14.0" height="1.2" fill="#5a7aa8"/><rect x="2.5" y="6" width="9.0" height="1.2" fill="#5a7aa8"/><rect x="0.0" y="8" width="14.0" height="1.2" fill="#5a7aa8"/><rect x="2.5" y="10" width="9.0" height="1.2" fill="#5a7aa8"/><rect x="0.0" y="12" width="14.0" height="1.2" fill="#5a7aa8"/></svg>
<svg style="left:804px;top:320px" width="14" height="14" viewBox="0 0 14 14"><rect x="0" y="0" width="14" height="1.2" fill="#5a7aa8"/><rect x="5" y="2" width="9" height="1.2" fill="#5a7aa8"/><rect x="0" y="4" width="14" height="1.2" fill="#5a7aa8"/><rect x="5" y="6" width="9" height="1.2" fill="#5a7aa8"/><rect x="0" y="8" width="14" height="1.2" fill="#5a7aa8"/><rect x="5" y="10" width="9" height="1.2" fill="#5a7aa8"/><rect x="0" y="12" width="14" height="1.2" fill="#5a7aa8"/></svg>
<svg style="left:829px;top:320px" width="14" height="14" viewBox="0 0 14 14"><rect x="0" y="0" width="14" height="1.2" fill="#5a7aa8"/><rect x="0" y="2" width="14" height="1.2" fill="#5a7aa8"/><rect x="0" y="4" width="14" height="1.2" fill="#5a7aa8"/><rect x="0" y="6" width="14" height="1.2" fill="#5a7aa8"/><rect x="0" y="8" width="14" height="1.2" fill="#5a7aa8"/><rect x="0" y="10" width="14" height="1.2" fill="#5a7aa8"/><rect x="0" y="12" width="14" height="1.2" fill="#5a7aa8"/></svg>
<div class="grp" style="left:749px;top:352px;width:74px;height:28px"></div>
<svg style="left:753px;top:359px" width="15" height="14" viewBox="0 0 15 14"><circle cx="2" cy="2" r="1.8" fill="#3f5d8b"/><circle cx="2" cy="6.7" r="1.8" fill="#3f5d8b"/><circle cx="2" cy="11.4" r="1.8" fill="#3f5d8b"/><rect x="5" y="1.3" width="9" height="1.4" fill="#3f5d8b"/><rect x="5" y="6" width="9" height="1.4" fill="#3f5d8b"/><rect x="5" y="10.7" width="9" height="1.4" fill="#3f5d8b"/></svg>
<svg style="left:777px;top:364px" width="6" height="3" viewBox="0 0 6 3"><path d="M0 0h6L3 3z" fill="#111"/></svg>
<svg style="left:789px;top:358px" width="15" height="15" viewBox="0 0 15 15"><text x="0.5" y="5" font-family="Liberation Sans" font-size="5.5" font-weight="bold" fill="#3f5d8b">1</text><text x="0.5" y="10" font-family="Liberation Sans" font-size="5.5" font-weight="bold" fill="#3f5d8b">2</text><text x="0.5" y="15" font-family="Liberation Sans" font-size="5.5" font-weight="bold" fill="#3f5d8b">3</text><rect x="6" y="2.3" width="8" height="1.4" fill="#3f5d8b"/><rect x="6" y="7" width="8" height="1.4" fill="#3f5d8b"/><rect x="6" y="11.7" width="8" height="1.4" fill="#3f5d8b"/></svg>
<svg style="left:812px;top:364px" width="6" height="3" viewBox="0 0 6 3"><path d="M0 0h6L3 3z" fill="#111"/></svg>
<div class="grp" style="left:843px;top:352px;width:51px;height:28px"></div>
<svg style="left:846px;top:357px" width="15" height="15" viewBox="0 0 15 15"><path d="M6 1.5l6 6-4.5 5.5-6-6z" fill="#cfe2f6" stroke="#4a78b5"/><path d="M3 3.5c2-3 5-3 4 0" fill="none" stroke="#4a78b5" stroke-width="1"/><path d="M11 5c3 1 3 5 1.5 7" fill="none" stroke="#2a2a2a" stroke-width="1.6"/></svg>
<div class="a" style="left:862px;top:357px;width:15px;height:17px;border:1px solid #6f87aa;background:linear-gradient(#dfe4ea,#8c96a2)"></div>
<div class="a" style="left:864px;top:359px;width:11px;height:13px;border:1px solid #222;background:#f8f8f8"></div>
<svg style="left:882px;top:364px" width="6" height="3" viewBox="0 0 6 3"><path d="M0 0h6L3 3z" fill="#111"/></svg>
<div class="t" style="left:748px;top:389px;color:#222"><span style="text-decoration:underline">S</span>pacing:</div>
<div class="t" style="left:869px;top:389px;color:#222"><span style="text-decoration:underline">I</span>ndent:</div>
<div class="a" style="left:861px;top:388px;width:1px;height:148px;background:#c4ced9"></div>
<div class="a" style="left:862px;top:388px;width:1px;height:148px;background:#f5f7fa"></div>
<div class="grp" style="left:749px;top:406px;width:52px;height:27px"></div>
<svg style="left:752px;top:410px" width="16" height="17" viewBox="0 0 16 17"><path d="M3.5 0.5L7 4H5v2.5H2V4H0z" fill="#6fd34a" stroke="#3b9b25" stroke-width=".8"/><path d="M3.5 16.5L7 13H5v-2.5H2V13H0z" fill="#6fd34a" stroke="#3b9b25" stroke-width=".8"/><g fill="#3f5d8b"><rect x="9" y="3" width="6" height="1.2"/><rect x="9" y="6" width="6" height="1.2"/><rect x="9" y="9" width="6" height="1.2"/><rect x="9" y="12" width="6" height="1.2"/></g></svg>
<svg style="left:777px;top:410px" width="16" height="17" viewBox="0 0 16 17"><path d="M3.5 7L7 3.5H5V0.5H2v3H0z" fill="#f8b445" stroke="#d08a1e" stroke-width=".8"/><path d="M3.5 10L7 13.5H5v3H2v-3H0z" fill="#f8b445" stroke="#d08a1e" stroke-width=".8"/><g fill="#3f5d8b"><rect x="9" y="3" width="6" height="1.2"/><rect x="9" y="6" width="6" height="1.2"/><rect x="9" y="9" width="6" height="1.2"/><rect x="9" y="12" width="6" height="1.2"/></g></svg>
<div class="grp" style="left:869px;top:406px;width:81px;height:27px"></div>
<svg style="left:873px;top:412px" width="15" height="14" viewBox="0 0 15 14"><path d="M0.5 4h3V1.5L7.5 5.5 3.5 9.5V7h-3z" fill="#6fd34a" stroke="#3b9b25" stroke-width=".8"/><g fill="#3f5d8b"><rect x="10" y="0" width="4" height="1.1"/><rect x="10" y="2.2" width="4" height="1.1"/><rect x="10" y="4.4" width="4" height="1.1"/><rect x="10" y="6.6" width="4" height="1.1"/><rect x="10" y="8.8" width="4" height="1.1"/><rect x="10" y="11" width="4" height="1.1"/></g></svg>
<svg style="left:898px;top:412px" width="15" height="14" viewBox="0 0 15 14"><g fill="#3f5d8b"><rect x="0" y="0" width="4" height="1.1"/><rect x="0" y="2.2" width="4" height="1.1"/><rect x="0" y="4.4" width="4" height="1.1"/><rect x="0" y="6.6" width="4" height="1.1"/><rect x="0" y="8.8" width="4" height="1.1"/><rect x="0" y="11" width="4" height="1.1"/></g><path d="M14.5 4h-3V1.5L7.5 5.5l4 4V7h3z" fill="#f8b445" stroke="#d08a1e" stroke-width=".8"/></svg>
<svg style="left:922px;top:412px" width="18" height="14" viewBox="0 0 18 14"><path d="M0.5 4h3V1.5L7.5 5.5 3.5 9.5V7h-3z" fill="#6fd34a" stroke="#3b9b25" stroke-width=".8"/><path d="M9 2h3M9 1v2M11 1v2" stroke="#3f5d8b" stroke-width=".8"/><g fill="#3f5d8b"><rect x="13" y="0" width="4" height="1.1"/><rect x="15" y="2.2" width="2" height="1.1"/><rect x="15" y="4.4" width="2" height="1.1"/><rect x="15" y="6.6" width="2" height="1.1"/><rect x="15" y="8.8" width="2" height="1.1"/><rect x="13" y="11" width="4" height="1.1"/></g></svg>
<div class="spin" style="left:771px;top:445px"><div class="t">0,00cm</div><div class="sb"></div></div>
<div class="a" style="left:826px;top:456px;width:15px;height:1px;background:#d0d6dd"></div>
<svg style="left:831px;top:450px" width="7" height="4" viewBox="0 0 7 4"><path d="M3.5 0L7 4H0z" fill="#5b7fb3"/></svg>
<svg style="left:831px;top:459px" width="7" height="4" viewBox="0 0 7 4"><path d="M3.5 4L7 0H0z" fill="#5b7fb3"/></svg>
<div class="spin" style="left:771px;top:477px"><div class="t">0,00cm</div><div class="sb"></div></div>
<div class="a" style="left:826px;top:488px;width:15px;height:1px;background:#d0d6dd"></div>
<svg style="left:831px;top:482px" width="7" height="4" viewBox="0 0 7 4"><path d="M3.5 0L7 4H0z" fill="#5b7fb3"/></svg>
<svg style="left:831px;top:491px" width="7" height="4" viewBox="0 0 7 4"><path d="M3.5 4L7 0H0z" fill="#5b7fb3"/></svg>
<div class="spin" style="left:891px;top:445px"><div class="t">0,00cm</div><div class="sb"></div></div>
<div class="a" style="left:946px;top:456px;width:15px;height:1px;background:#d0d6dd"></div>
<svg style="left:951px;top:450px" width="7" height="4" viewBox="0 0 7 4"><path d="M3.5 0L7 4H0z" fill="#5b7fb3"/></svg>
<svg style="left:951px;top:459px" width="7" height="4" viewBox="0 0 7 4"><path d="M3.5 4L7 0H0z" fill="#5b7fb3"/></svg>
<div class="spin" style="left:891px;top:477px"><div class="t">0,00cm</div><div class="sb"></div></div>
<div class="a" style="left:946px;top:488px;width:15px;height:1px;background:#d0d6dd"></div>
<svg style="left:951px;top:482px" width="7" height="4" viewBox="0 0 7 4"><path d="M3.5 0L7 4H0z" fill="#5b7fb3"/></svg>
<svg style="left:951px;top:491px" width="7" height="4" viewBox="0 0 7 4"><path d="M3.5 4L7 0H0z" fill="#5b7fb3"/></svg>
<div class="spin" style="left:891px;top:509px"><div class="t">0,00cm</div><div class="sb"></div></div>
<div class="a" style="left:946px;top:520px;width:15px;height:1px;background:#d0d6dd"></div>
<svg style="left:951px;top:514px" width="7" height="4" viewBox="0 0 7 4"><path d="M3.5 0L7 4H0z" fill="#5b7fb3"/></svg>
<svg style="left:951px;top:523px" width="7" height="4" viewBox="0 0 7 4"><path d="M3.5 4L7 0H0z" fill="#5b7fb3"/></svg>
<svg style="left:749px;top:447px" width="16" height="17" viewBox="0 0 16 17"><path d="M6 1h4M8 1v6M6 7h4" stroke="#3f5d8b" stroke-width="1"/><g fill="#3f5d8b"><rect x="1" y="9" width="14" height="1.4"/><rect x="1" y="12" width="14" height="1.4"/><rect x="1" y="15" width="14" height="1.4"/></g></svg>
<svg style="left:749px;top:479px" width="16" height="17" viewBox="0 0 16 17"><g fill="#3f5d8b"><rect x="1" y="0" width="14" height="1.4"/><rect x="1" y="3" width="14" height="1.4"/><rect x="1" y="6" width="14" height="1.4"/></g><path d="M6 10h4M8 10v6M6 16h4" stroke="#3f5d8b" stroke-width="1"/></svg>
<div class="grp" style="left:749px;top:508px;width:40px;height:28px"></div>
<svg style="left:753px;top:514px" width="16" height="14" viewBox="0 0 16 14"><path d="M3 1v12M1 3.5L3 1 5 3.5M1 10.5L3 13 5 10.5" fill="none" stroke="#3f5d8b" stroke-width="1.3"/><g fill="#3f5d8b"><rect x="7" y="3" width="9" height="1.4"/><rect x="7" y="6.3" width="9" height="1.4"/><rect x="7" y="9.6" width="9" height="1.4"/></g></svg>
<svg style="left:777px;top:520px" width="6" height="3" viewBox="0 0 6 3"><path d="M0 0h6L3 3z" fill="#111"/></svg>
<svg style="left:869px;top:449px" width="16" height="17" viewBox="0 0 16 17"><path d="M1 2h7M1 0.5v3M8 0.5v3" stroke="#3f5d8b" stroke-width="1"/><g fill="#3f5d8b"><rect x="10" y="1" width="5" height="1.3"/><rect x="10" y="5" width="5" height="1.3"/><rect x="10" y="9" width="5" height="1.3"/><rect x="10" y="13" width="5" height="1.3"/></g></svg>
<svg style="left:869px;top:481px" width="16" height="17" viewBox="0 0 16 17"><g fill="#3f5d8b"><rect x="1" y="1" width="5" height="1.3"/><rect x="1" y="5" width="5" height="1.3"/><rect x="1" y="9" width="5" height="1.3"/><rect x="1" y="13" width="5" height="1.3"/></g><path d="M8 2h7M8 0.5v3M15 0.5v3" stroke="#3f5d8b" stroke-width="1"/></svg>
<svg style="left:869px;top:513px" width="16" height="17" viewBox="0 0 16 17"><path d="M1 2h14M1 0.5v3M15 0.5v3" stroke="#3f5d8b" stroke-width="1"/><g fill="#3f5d8b"><rect x="1" y="5" width="14" height="1.4"/><rect x="1" y="8.5" width="14" height="1.4"/><rect x="1" y="12" width="14" height="1.4"/></g></svg>
<div class="a" style="left:742px;top:549px;width:224px;height:1px;background:#b9c6d6"></div>
<div class="a" style="left:742px;top:550px;width:224px;height:26px;background:linear-gradient(#eef2f7,#e4e9f0)"></div>
<div class="a" style="left:742px;top:576px;width:224px;height:1px;background:#c3cedb"></div>
<div class="a" style="left:749px;top:558px;width:9px;height:9px;border:1px solid #5b7fb0;background:#f4f7fb"></div>
<div class="a" style="left:751px;top:562px;width:5px;height:1px;background:#2e4f80"></div>
<div class="a" style="left:753px;top:560px;width:1px;height:5px;background:#2e4f80"></div>
<div class="t" style="left:767px;top:556px;color:#222">Page</div>
<div class="a" style="left:946px;top:556px;width:12px;height:11px;border:1px solid #5d84b8;background:linear-gradient(#c9dbf0 0 3px,#f4f8fc 3px)"></div>
<div class="a" style="left:949px;top:563px;width:6px;height:1px;background:repeating-linear-gradient(90deg,#3a5a88 0 1px,transparent 1px 2px)"></div>
<div class="a" style="left:742px;top:577px;width:224px;height:96px;background:linear-gradient(#e2e7ef,#e0e6ee)"></div>
<div class="a" style="left:970px;top:122px;width:37px;height:555px;background:linear-gradient(90deg,#e2e8ef,#e9eef4)"></div><div class="a" style="left:1008px;top:120px;width:4px;height:563px;background:#e9edf2"></div>
<div class="a" style="left:972px;top:122px;width:35px;height:45px;border:1px solid #aab5c1;border-top:none;border-right:none;background:#eceff3"></div>
<svg style="left:982px;top:138px" width="12" height="11" viewBox="0 0 12 11"><g fill="#555"><rect x="1" y="0" width="5" height="1.2"/><rect x="1" y="2.5" width="5" height="1.2"/><rect x="1" y="5" width="5" height="1.2"/></g><path d="M4 7h6L7 10z" fill="#333"/></svg>
<div class="a" style="left:985px;top:160px;width:14px;height:1px;background:#c9d2dc"></div>
<div class="a" style="left:968px;top:167px;width:36px;height:35px;border:1px solid #9aabbd;border-left:none;background:#e4e9f0"></div>
<div class="a" style="left:972px;top:202px;width:35px;height:475px;border-left:1px solid #aab5c1;border-top:1px solid #aab5c1;background:#eaeef3"></div><svg style="left:976px;top:172px" width="21" height="21" viewBox="0 0 21 21"><path d="M8 1.8L12.0 0L16 1.8L12.0 3.6z" fill="#6cc6f6"/><path d="M8 1.8L12.0 3.6V7.6L8 5.8z" fill="#2a9be8"/><path d="M12.0 3.6L16 1.8V5.8L12.0 7.6z" fill="#1b7fd0"/><path d="M1 4.75L6.0 2.5L11 4.75L6.0 7.0z" fill="#6cc6f6"/><path d="M1 4.75L6.0 7.0V12.0L1 9.75z" fill="#2a9be8"/><path d="M6.0 7.0L11 4.75V9.75L6.0 12.0z" fill="#1b7fd0"/><path d="M9.5 4.75L14.5 2.5L19.5 4.75L14.5 7.0z" fill="#a6ec6a"/><path d="M9.5 4.75L14.5 7.0V12.0L9.5 9.75z" fill="#6fd42a"/><path d="M14.5 7.0L19.5 4.75V9.75L14.5 12.0z" fill="#4eb818"/><path d="M1 10.575L4.5 9L8 10.575L4.5 12.15z" fill="#6cc6f6"/><path d="M1 10.575L4.5 12.15V15.65L1 14.075z" fill="#2a9be8"/><path d="M4.5 12.15L8 10.575V14.075L4.5 15.65z" fill="#1b7fd0"/><path d="M5.5 12.25L10.5 10L15.5 12.25L10.5 14.5z" fill="#a6ec6a"/><path d="M5.5 12.25L10.5 14.5V19.5L5.5 17.25z" fill="#6fd42a"/><path d="M10.5 14.5L15.5 12.25V17.25L10.5 19.5z" fill="#4eb818"/><ellipse cx="10.5" cy="20" rx="7" ry="1" fill="#000" opacity=".08"/></svg>
<svg style="left:976px;top:206px" width="22" height="22" viewBox="0 0 22 22">
<circle cx="5" cy="6" r="3" fill="#ee7a2c"/><circle cx="12" cy="4" r="2.5" fill="#c65bd8"/><path d="M17 1l1 2.2 2.4.3-1.8 1.6.5 2.4-2.1-1.2-2.1 1.2.5-2.4-1.8-1.6 2.4-.3z" fill="#f4d23a"/>
<circle cx="3" cy="13" r="2.3" fill="#f0609a"/><circle cx="19" cy="12" r="2.3" fill="#f0609a"/>
<path d="M6 20l3-12 8 9z" fill="#2d7ed6"/><path d="M9 8l8 9-4 1z" fill="#163f7a"/><circle cx="15" cy="18" r="3" fill="#56c043"/>
</svg>
<svg style="left:976px;top:241px" width="22" height="22" viewBox="0 0 22 22">
<g transform="rotate(-15 11 11)"><rect x="2" y="5" width="18" height="13" fill="#fff" stroke="#a9b2bc" stroke-width=".8"/>
<rect x="4" y="7" width="14" height="9" fill="#8fd0f4"/><path d="M4 16l5-5 4 3 2-2 3 4z" fill="#4ab43a"/><circle cx="14" cy="9.5" r="1.3" fill="#fff"/></g>
<path d="M5 4l4 3-3 1z" fill="#3f8fd8"/>
</svg>
<svg style="left:976px;top:276px" width="22" height="22" viewBox="0 0 22 22">
<circle cx="11" cy="11" r="9.5" fill="#fff" stroke="#f09a1e" stroke-width="2.2"/>
<path d="M14.5 7.5L9.5 9.5 7.5 14.5 12.5 12.5z" fill="#3d7fd0"/><path d="M14.5 7.5L12.5 12.5 11 11z" fill="#e9322a"/>
<text x="9.6" y="7" font-family="Liberation Sans" font-size="4.5" font-weight="bold" fill="#333">N</text>
</svg>
<div class="a" style="left:8px;top:676px;width:1004px;height:3px;background:#d6dde5"></div>
<div class="a" style="left:8px;top:679px;width:1004px;height:4px;background:linear-gradient(#a8b4c2,#b9c5d2)"></div>
<div class="a" style="left:8px;top:683px;width:1004px;height:23px;background:#dfe5ec"></div>
<div class="fld" style="left:14px;width:252px"></div>
<div class="t" style="left:19px;top:689px;color:#1e1e1e"><span style="word-spacing:-0.7px">Page 1 / 1</span></div>
<div class="fld" style="left:268px;width:118px"></div>
<div class="t" style="left:272px;top:689px;color:#1e1e1e">Default</div>
<div class="fld" style="left:388px;width:48px"></div>
<div class="fld" style="left:437px;width:52px"></div>
<div class="t" style="left:440px;top:689px;color:#1e1e1e">Insert</div>
<div class="fld" style="left:492px;width:64px"></div>
<div class="t" style="left:496px;top:689px;color:#1e1e1e">Standard</div>
<div class="fld" style="left:559px;width:135px"></div>
<div class="fld" style="left:697px;width:51px"></div>
<div class="t" style="left:701px;top:689px;color:#1e1e1e;letter-spacing:-0.4px">100%</div>
<div class="fld" style="left:750px;width:262px"></div>
<svg style="left:565px;top:687px" width="13" height="15" viewBox="0 0 13 15">
 <path d="M0.8 0.8h8.4l3 3v10.4H0.8z" fill="#e6f0fb" stroke="#4f86c8" stroke-width="1.2"/>
 <path d="M9 0.8v3h3" fill="none" stroke="#4f86c8" stroke-width="1"/>
</svg>
<svg style="left:585px;top:687px" width="16" height="14" viewBox="0 0 16 14">
 <path d="M1 1.5h6v11.5H1zM8.5 1.5h6v11.5h-6z" fill="#cfe1f6" stroke="#2a4f86" stroke-width="1.4"/>
 <path d="M2.5 3h3M10 3h3" stroke="#2a4f86" stroke-width="1.2"/>
</svg>
<svg style="left:606px;top:687px" width="17" height="14" viewBox="0 0 17 14">
 <path d="M1 3h6v10H1zM8.5 1h6.5v12H8.5z" fill="#e3eefa" stroke="#5a8fd0" stroke-width="1.2"/>
</svg>
<div class="t" style="left:771px;top:673px;font-size:31px;line-height:34px;color:rgba(105,105,105,.55);letter-spacing:-0.3px;text-shadow:0 0 2px rgba(255,255,255,.6)">SOFT-</div>
<div class="a" style="left:867px;top:666px;width:72px;height:44px;border-radius:10px;background:rgba(90,90,90,.52);border:2px solid rgba(235,235,240,.6)"></div>
<div class="t" style="left:876px;top:673px;font-size:31px;line-height:34px;color:rgba(240,240,240,.92)">OK</div>
<div class="t" style="left:941px;top:673px;font-size:31px;line-height:34px;color:rgba(105,105,105,.55);letter-spacing:-0.3px;text-shadow:0 0 2px rgba(255,255,255,.6)">.NET</div><!-- MENU -->
<div class="a" style="left:160px;top:49px;width:252px;height:429px;background:#f0f0f0;border:1px solid #a0a0a0;box-shadow:inset 0 0 0 1px #fbfbfb"></div>
<div class="a" style="left:188px;top:50px;width:1px;height:427px;background:#e0e0e0"></div>
<div class="a" style="left:189px;top:50px;width:1px;height:427px;background:#ffffff"></div>
<div class="a" style="left:190px;top:142px;width:218px;height:1px;background:#e0e0e0"></div>
<div class="a" style="left:190px;top:143px;width:218px;height:1px;background:#fff"></div>
<div class="a" style="left:190px;top:236px;width:218px;height:1px;background:#e0e0e0"></div>
<div class="a" style="left:190px;top:237px;width:218px;height:1px;background:#fff"></div>
<div class="a" style="left:190px;top:398px;width:218px;height:1px;background:#e0e0e0"></div>
<div class="a" style="left:190px;top:399px;width:218px;height:1px;background:#fff"></div>
<div class="a" style="left:190px;top:449px;width:218px;height:1px;background:#e0e0e0"></div>
<div class="a" style="left:190px;top:450px;width:218px;height:1px;background:#fff"></div>
<div class="a" style="left:162px;top:328px;width:247px;height:22px;border:1px solid #a9cbee;border-radius:2px;background:linear-gradient(#f5f9fd,#e8f0fa);box-shadow:inset 0 0 0 1px rgba(255,255,255,.7)"></div>
<div class="t" style="left:194px;top:55px;color:#1a1a1a">Default Formatting</div>
<div class="t" style="right:628px;top:55px;color:#1a1a1a">Ctrl+T</div>
<div class="t" style="left:194px;top:77px;color:#1a1a1a">Properties</div>
<div class="a" style="left:397px;top:80px;width:0;height:0;border-left:4px solid #1a1a1a;border-top:4px solid transparent;border-bottom:4px solid transparent"></div>
<div class="t" style="left:194px;top:98px;color:#1a1a1a">Bullets and Numbering...</div>
<div class="t" style="left:194px;top:120px;color:#1a1a1a">Outline Numbering...</div>
<div class="t" style="left:194px;top:150px;color:#979797">Sections...</div>
<div class="t" style="left:194px;top:172px;color:#1a1a1a">Columns...</div>
<div class="t" style="left:194px;top:193px;color:#1a1a1a">Footnote and Endnote...</div>
<div class="t" style="left:194px;top:215px;color:#1a1a1a">Change Case</div>
<div class="a" style="left:397px;top:218px;width:0;height:0;border-left:4px solid #1a1a1a;border-top:4px solid transparent;border-bottom:4px solid transparent"></div>
<div class="t" style="left:194px;top:245px;color:#1a1a1a">Anchor</div>
<div class="a" style="left:397px;top:248px;width:0;height:0;border-left:4px solid #1a1a1a;border-top:4px solid transparent;border-bottom:4px solid transparent"></div>
<div class="t" style="left:194px;top:267px;color:#979797">Rotate</div>
<div class="t" style="left:194px;top:288px;color:#1a1a1a">Flip</div>
<div class="a" style="left:397px;top:291px;width:0;height:0;border-left:4px solid #1a1a1a;border-top:4px solid transparent;border-bottom:4px solid transparent"></div>
<div class="t" style="left:194px;top:310px;color:#1a1a1a">Arrange</div>
<div class="a" style="left:397px;top:313px;width:0;height:0;border-left:4px solid #1a1a1a;border-top:4px solid transparent;border-bottom:4px solid transparent"></div>
<div class="t" style="left:194px;top:332px;color:#1a1a1a">Align</div>
<div class="a" style="left:397px;top:335px;width:0;height:0;border-left:4px solid #1a1a1a;border-top:4px solid transparent;border-bottom:4px solid transparent"></div>
<div class="t" style="left:194px;top:353px;color:#1a1a1a">Wrap</div>
<div class="a" style="left:397px;top:356px;width:0;height:0;border-left:4px solid #1a1a1a;border-top:4px solid transparent;border-bottom:4px solid transparent"></div>
<div class="t" style="left:194px;top:375px;color:#1a1a1a">Group</div>
<div class="a" style="left:397px;top:378px;width:0;height:0;border-left:4px solid #1a1a1a;border-top:4px solid transparent;border-bottom:4px solid transparent"></div>
<div class="t" style="left:194px;top:404px;color:#979797">Object Name...</div>
<div class="t" style="left:194px;top:427px;color:#979797">Object Description...</div>
<div class="t" style="left:194px;top:456px;color:#1a1a1a">Style List</div>
<div class="t" style="right:628px;top:456px;color:#1a1a1a">F11</div>
<!-- SUBMENU -->
<div class="a" style="left:406px;top:325px;width:207px;height:145px;background:#f0f0f0;border:1px solid #a0a0a0;box-shadow:inset 0 0 0 1px #fbfbfb"></div>
<div class="a" style="left:434px;top:326px;width:1px;height:143px;background:#e2e3e3"></div>
<div class="a" style="left:435px;top:326px;width:1px;height:143px;background:#fff"></div>
<div class="a" style="left:435px;top:398px;width:174px;height:1px;background:#e0e0e0"></div>
<div class="a" style="left:435px;top:399px;width:174px;height:1px;background:#fff"></div>
<div class="a" style="left:408px;top:328px;width:201px;height:22px;border:1px solid #a9cbee;border-radius:2px;background:linear-gradient(#f5f9fd,#e8f0fa);box-shadow:inset 0 0 0 1px rgba(255,255,255,.7)"></div>
<div class="t" style="left:440px;top:332px;color:#1a1a1a">Align Left</div>
<div class="t" style="left:440px;top:354px;color:#1a1a1a">Align Horizontally Center</div>
<div class="t" style="left:440px;top:375px;color:#1a1a1a">Align Right</div>
<div class="t" style="left:440px;top:405px;color:#979797">Align Top</div>
<div class="t" style="left:440px;top:427px;color:#979797">Align Vertically Center</div>
<div class="t" style="left:440px;top:448px;color:#979797">Align Bottom</div><svg style="left:164px;top:243px" width="17" height="17" viewBox="0 0 17 17">
 <circle cx="8.5" cy="3.2" r="2.1" fill="none" stroke="#e08a12" stroke-width="1.8"/>
 <path d="M8.5 5v10.5" stroke="#e08a12" stroke-width="2"/>
 <path d="M1.8 8.5c0.5 4.5 3.5 6.8 6.7 6.8s6.2-2.3 6.7-6.8" fill="none" stroke="#e99a1c" stroke-width="2.2"/>
 <path d="M1.5 8l-1 1.5M15.5 8l1 1.5" stroke="#e08a12" stroke-width="1.2"/>
</svg>
<svg style="left:165px;top:267px" width="16" height="15" viewBox="0 0 16 15">
 <path d="M11.5 3.5A5.5 5.5 0 1 0 12.5 10" fill="none" stroke="#c9c9c9" stroke-width="2.2"/>
 <path d="M9 3.5h5v-4" fill="none" stroke="#c9c9c9" stroke-width="1.8"/>
 <path d="M8 7.5h6v5" fill="none" stroke="#d6d6d6" stroke-width="1.6"/>
</svg>
<!-- submenu icons -->
<svg style="left:412px;top:332px" width="15" height="14" viewBox="0 0 15 14">
 <rect x="0.75" y="0.75" width="13.5" height="12.5" fill="#f4f8fd" stroke="#4470ad" stroke-width="1.5"/>
 <rect x="2.8" y="2.3" width="4" height="9.4" fill="#f3a928" stroke="#d27f10" stroke-width=".6"/>
 <path d="M7.5 7h5M9.5 5l-2 2 2 2" fill="none" stroke="#3d6fbf" stroke-width="1.2"/>
</svg>
<svg style="left:412px;top:354px" width="15" height="14" viewBox="0 0 15 14">
 <rect x="0.75" y="0.75" width="13.5" height="12.5" fill="#f4f8fd" stroke="#4470ad" stroke-width="1.5"/>
 <rect x="5.5" y="2.3" width="4" height="9.4" fill="#f3a928" stroke="#d27f10" stroke-width=".6"/>
 <path d="M2 7h3M4 5.5L5.5 7 4 8.5M13 7h-3M11 5.5L9.5 7 11 8.5" fill="none" stroke="#3d6fbf" stroke-width="1.1"/>
</svg>
<svg style="left:412px;top:376px" width="15" height="14" viewBox="0 0 15 14">
 <rect x="0.75" y="0.75" width="13.5" height="12.5" fill="#f4f8fd" stroke="#4470ad" stroke-width="1.5"/>
 <rect x="8.2" y="2.3" width="4" height="9.4" fill="#f3a928" stroke="#d27f10" stroke-width=".6"/>
 <path d="M7.5 7h-5M5.5 5l2 2-2 2" fill="none" stroke="#3d6fbf" stroke-width="1.2"/>
</svg>
<svg style="left:412px;top:405px" width="15" height="15" viewBox="0 0 15 15">
 <rect x="0.75" y="0.75" width="13.5" height="13.5" fill="#f3f3f3" stroke="#cdcdcd" stroke-width="1.5"/>
 <rect x="3" y="3" width="9" height="3.5" fill="#dcdcdc" stroke="#c4c4c4" stroke-width=".6"/>
 <path d="M5 9.5h5M7.5 8v4" stroke="#cfcfcf" stroke-width="1"/>
</svg>
<svg style="left:412px;top:427px" width="15" height="14" viewBox="0 0 15 14">
 <rect x="0.75" y="0.75" width="13.5" height="12.5" fill="#f3f3f3" stroke="#cdcdcd" stroke-width="1.5"/>
 <rect x="3" y="5.25" width="9" height="3.5" fill="#dcdcdc" stroke="#c4c4c4" stroke-width=".6"/>
 <path d="M5 3h5M5 11h5" stroke="#cfcfcf" stroke-width="1"/>
</svg>
<svg style="left:412px;top:449px" width="15" height="14" viewBox="0 0 15 14">
 <rect x="0.75" y="0.75" width="13.5" height="12.5" fill="#f3f3f3" stroke="#cdcdcd" stroke-width="1.5"/>
 <rect x="3" y="7.5" width="9" height="3.5" fill="#dcdcdc" stroke="#c4c4c4" stroke-width=".6"/>
 <path d="M5 4h5M7.5 2v4" stroke="#cfcfcf" stroke-width="1"/>
</svg>
</body></html>
